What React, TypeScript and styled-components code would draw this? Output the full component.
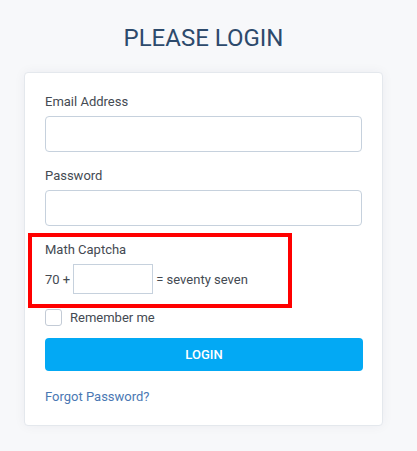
import React from "react";
import styled, { createGlobalStyle } from "styled-components";

const Global = createGlobalStyle`
  html, body {
    margin: 0;
    padding: 0;
    background: #f7f8fa;
    font-family: Roboto, "Liberation Sans", Arial, sans-serif;
  }
  * { box-sizing: border-box; }
`;

const Page = styled.div`
  width: 417px;
  min-height: 451px;
  padding-top: 23px;
`;

const Title = styled.h1`
  margin: 0 0 19px 0;
  width: 359px;
  margin-left: 24px;
  text-align: center;
  font-size: 24px;
  line-height: 30px;
  font-weight: 400;
  color: #2d4a6c;
`;

const Card = styled.div`
  margin-left: 24px;
  width: 359px;
  background: #ffffff;
  border: 1px solid #e4e8ed;
  border-radius: 4px;
  box-shadow: 0 0 12px rgba(20, 40, 80, 0.05);
  padding: 20px 20px 19px 20px;
`;

const Group = styled.div`
  position: relative;
  margin-bottom: 15px;
`;

const Label = styled.label`
  display: block;
  font-size: 13px;
  line-height: 18px;
  color: #444a52;
  margin-bottom: 5px;
`;

const Input = styled.input`
  display: block;
  width: 100%;
  height: 36px;
  border: 1px solid #c6d1dd;
  border-radius: 4px;
  background: #fff;
  padding: 0 10px;
  font-size: 13px;
  outline: none;
`;

const CaptchaRow = styled.div`
  display: flex;
  align-items: center;
  gap: 3px;
  font-size: 13px;
  color: #444a52;
`;

const CaptchaInput = styled.input`
  width: 80px;
  height: 30px;
  border: 1px solid #c6d1dd;
  border-radius: 0;
  background: #fff;
  padding: 0 6px;
  outline: none;
`;

const Highlight = styled.div`
  position: absolute;
  left: -17px;
  top: -8px;
  width: 264px;
  height: 75px;
  border: 4px solid #ff0000;
  pointer-events: none;
`;

const CheckRow = styled.label`
  display: flex;
  align-items: center;
  gap: 8px;
  height: 17px;
  margin-bottom: 12px;
  font-size: 13px;
  color: #444a52;
`;

const Check = styled.span`
  width: 17px;
  height: 17px;
  border: 1px solid #c3cbd6;
  border-radius: 3px;
  background: #fff;
`;

const Button = styled.button`
  display: block;
  width: 318px;
  height: 33px;
  border: none;
  border-radius: 4px;
  background: #03a9f4;
  color: #fff;
  font-family: Roboto, "Liberation Sans", Arial, sans-serif;
  font-size: 13px;
  font-weight: 500;
  margin-bottom: 17px;
`;

const Link = styled.a`
  display: block;
  font-size: 13px;
  line-height: 18px;
  color: #4a78b3;
  text-decoration: none;
`;

export default function App() {
  return (
    <Page>
      <Global />
      <Title>PLEASE LOGIN</Title>
      <Card>
        <Group>
          <Label>Email Address</Label>
          <Input type="email" />
        </Group>
        <Group>
          <Label>Password</Label>
          <Input type="password" />
        </Group>
        <Group>
          <Label>Math Captcha</Label>
          <CaptchaRow>
            <span>70 +</span>
            <CaptchaInput />
            <span>= seventy seven</span>
          </CaptchaRow>
          <Highlight />
        </Group>
        <CheckRow>
          <Check />
          Remember me
        </CheckRow>
        <Button>LOGIN</Button>
        <Link href="#">Forgot Password?</Link>
      </Card>
    </Page>
  );
}
